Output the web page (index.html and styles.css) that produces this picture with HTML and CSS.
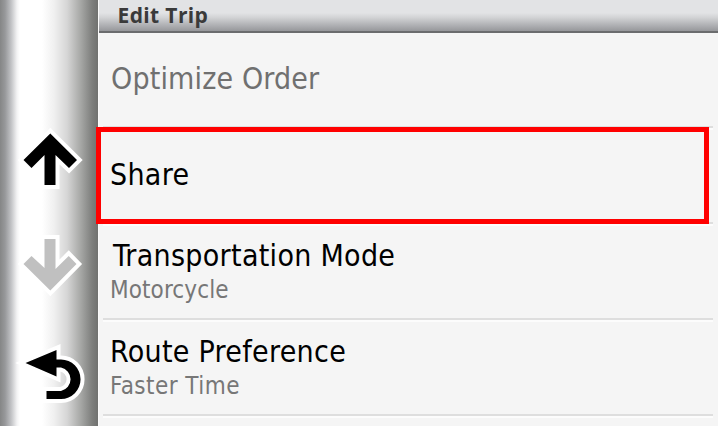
FILE: index.html
```
<!DOCTYPE html>
<html lang="en">
<head>
    <meta charset="UTF-8">
    <meta name="viewport" content="width=device-width, initial-scale=1.0">
    <title>Edit Trip</title>
    <link rel="stylesheet" href="styles.css">
</head>
<body>
    <!-- Side buttons -->
    <nav class="sidebar">
        <button class="up" aria-label="Up">
            <svg width="70" height="70" viewBox="0 0 70 70">
                <path class="glow" d="M36.3 10.5L63 37L55 45L41.5 32V62H30.5V32L17.5 45L9.5 37Z"/>
                <path d="M36.3 10.5L63 37L55 45L41.5 32V62H30.5V32L17.5 45L9.5 37Z"/>
            </svg>
        </button>
        <button class="down" aria-label="Down">
            <svg width="70" height="70" viewBox="0 0 70 70">
                <path class="glow" d="M30.5 9H41.5V39L54.7 26L62.5 34L36.3 60.5L9.5 34L17.5 26L30.5 38Z"/>
                <path d="M30.5 9H41.5V39L54.7 26L62.5 34L36.3 60.5L9.5 34L17.5 26L30.5 38Z"/>
            </svg>
        </button>
        <button class="back" aria-label="Back">
            <svg width="74" height="70" viewBox="0 0 74 70">
                <path class="glow" d="M11.5 23L42.5 10V19.5H47A19.5 19.7 0 0 1 47 59H32.5V51H47A12 12 0 0 0 47 27.5H42.5V36.5Z"/>
                <path d="M11.5 23L42.5 10V19.5H47A19.5 19.7 0 0 1 47 59H32.5V51H47A12 12 0 0 0 47 27.5H42.5V36.5Z"/>
            </svg>
        </button>
    </nav>

    <!-- Trip menu -->
    <main>
        <header>Edit Trip</header>
        <ul class="menu">
            <li class="disabled"><h3>Optimize Order</h3></li>
            <li class="share"><h3>Share</h3></li>
            <li class="mode"><h3>Transportation Mode</h3><p>Motorcycle</p></li>
            <li class="route"><h3>Route Preference</h3><p>Faster Time</p></li>
        </ul>
    </main>
</body>
</html>
```
FILE: styles.css
```
/* General Styles */
* {
    box-sizing: border-box;
}

body {
    font-family: "DejaVu Sans Condensed", "DejaVu Sans", sans-serif;
    font-stretch: condensed;
    margin: 0;
    height: 426px;
    display: flex;
    overflow: hidden;
    background-color: #f5f5f5;
}

/* Sidebar */
.sidebar {
    width: 98px;
    height: 426px;
    padding: 123px 0 0 14px;
    display: flex;
    flex-direction: column;
    background: linear-gradient(to right, #858686 0, #97989a 5px, #c0c1c4 11px, #f3f3f4 17px, #ffffff 20px, #ffffff 42px, #f0f0f0 54px, #d6d6d6 67px, #a9aaa8 80px, #7e7f7d 92px, #70716f 98px);
}

.sidebar button {
    border: none;
    padding: 0;
    background: none;
    height: 70px;
    cursor: pointer;
}

.sidebar svg {
    display: block;
}

.sidebar .down {
    margin-top: 37px;
}

.sidebar .down path {
    fill: #c0c0c0;
}

.sidebar .back {
    margin-top: 40px;
}

.sidebar path.glow {
    fill: #ffffff;
    stroke: #ffffff;
    stroke-width: 8px;
    stroke-miterlimit: 4;
}

/* Header */
main {
    flex: 1;
    border-left: 1px solid #fafafa;
}

header {
    height: 33px;
    padding-left: 18px;
    border-bottom: 2px solid #6b6c6e;
    background: linear-gradient(#e2e3e5 0, #e2e3e5 13px, #d4d5d7 17px, #96979b 31px);
    color: #3a3a3a;
    font-family: "Open Sans", sans-serif;
    font-stretch: normal;
    font-size: 21px;
    font-weight: bold;
    letter-spacing: 0.35px;
    line-height: 30px;
    text-indent: 0.6px;
}

/* Menu */
.menu {
    list-style-type: none;
    margin: 0;
    padding: 0 5px 0 4px;
}

.menu li {
    position: relative;
    height: 96px;
    padding: 14px 0 0 7px;
    border-bottom: 2px solid #dedede;
    box-shadow: 0 2px 0 #fcfcfc;
}

.menu li.disabled {
    height: 95px;
    padding: 28px 0 0 8px;
    color: #707070;
}

.menu li.share {
    padding-top: 29px;
}

/* Highlight around the Share row */
.menu li.share::after {
    content: "";
    box-sizing: border-box;
    position: absolute;
    z-index: 1;
    left: -7px;
    top: -1px;
    width: 613px;
    height: 97px;
    border: 5px solid #ff0000;
}

.menu h3 {
    margin: 0;
    font-size: 30px;
    font-weight: normal;
    letter-spacing: 0.3px;
    line-height: 36px;
}

.menu p {
    margin: 0;
    color: #777777;
    font-size: 24px;
    letter-spacing: 0.1px;
    line-height: 32px;
}

.menu .disabled h3 {
    letter-spacing: 0.15px;
}

.menu .mode h3 {
    padding-left: 3px;
}

.menu .route p {
    letter-spacing: 0.45px;
}
```
